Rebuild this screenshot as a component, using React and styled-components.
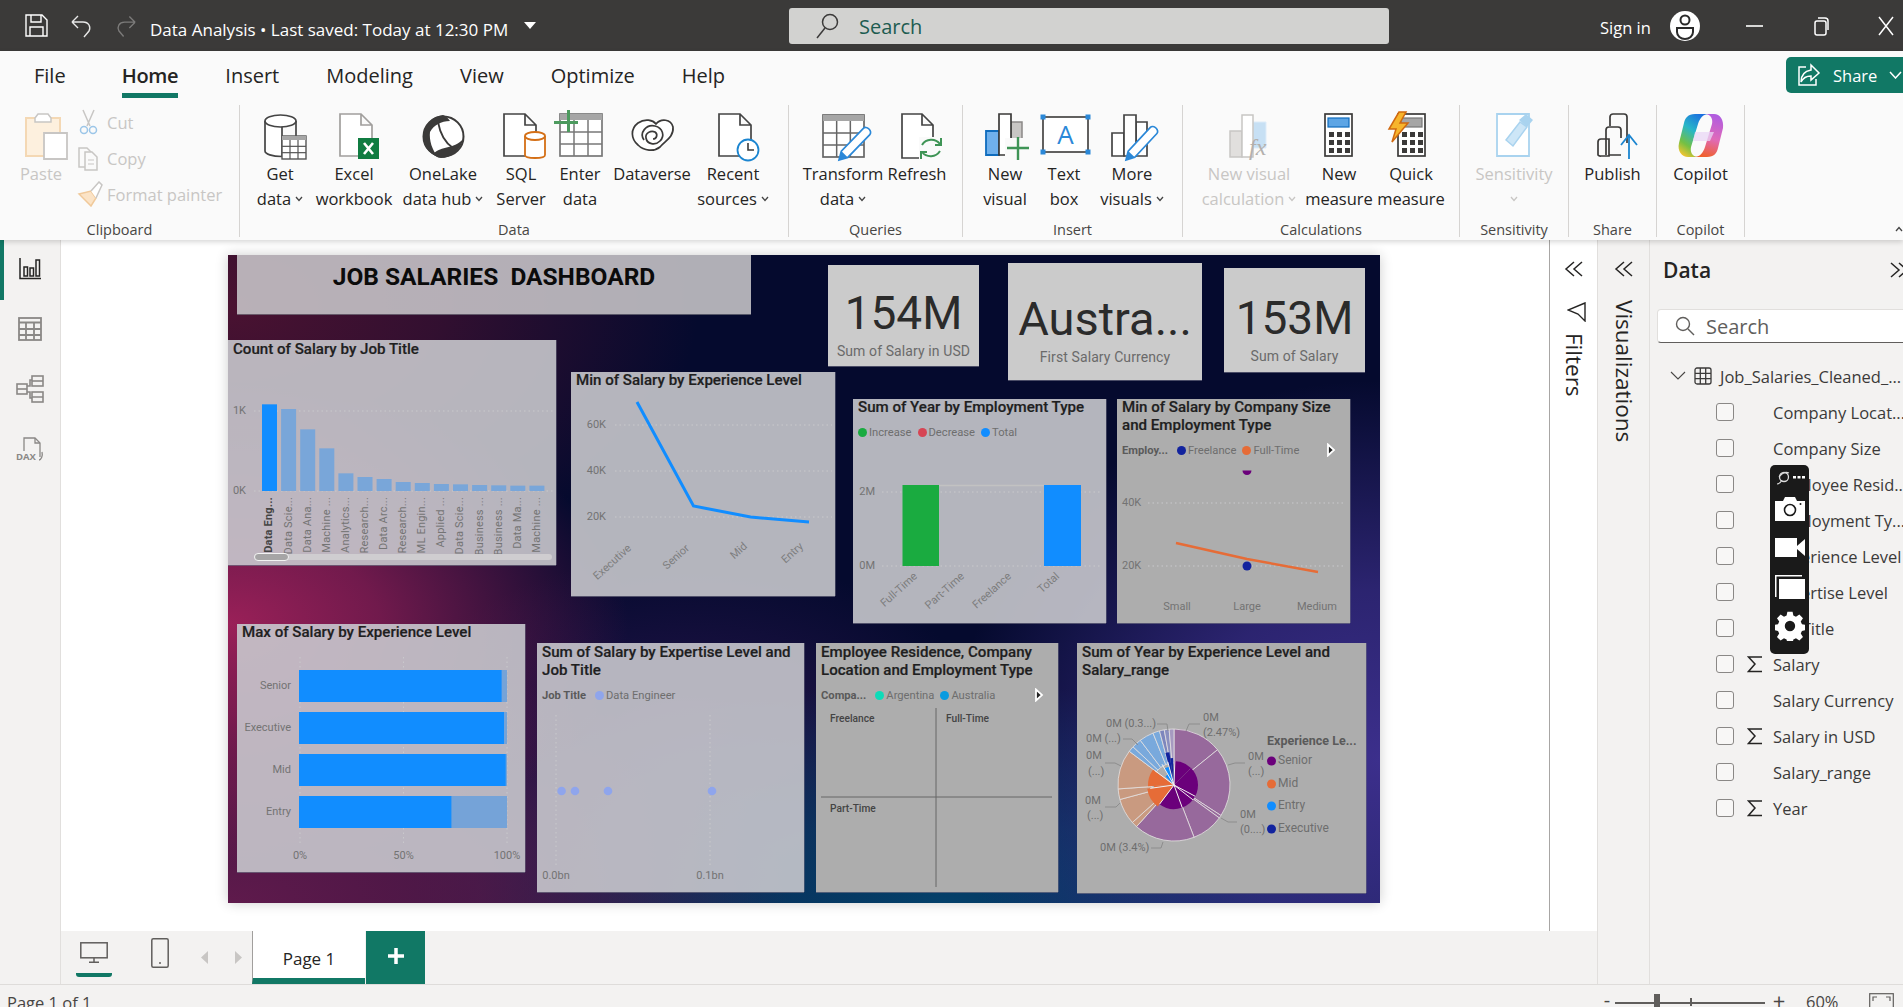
import React from 'react';
import styled, { createGlobalStyle } from 'styled-components';

const Global = createGlobalStyle`
  html, body { margin: 0; padding: 0; background: #fff; overflow: hidden; }
  * { box-sizing: border-box; }
`;

const GREEN = '#117865';
const UI = '"Open Sans", "Noto Sans", sans-serif';
const DIN = 'Roboto, "Liberation Sans", sans-serif';

const Page = styled.div`
  width: 1903px; height: 1007px; overflow: hidden; display: flex; flex-direction: column;
  font-family: ${UI}; color: #252423; background: #f3f2f1;
`;

/* ---------- title bar ---------- */
const TitleBar = styled.div`
  flex: none; height: 51px; background: #3b3a39; display: flex; align-items: center; color: #fff;
`;
const QuickIcon = styled.svg`
  flex: none; margin-left: ${p => p.$ml}px; display: block;
`;
const DocName = styled.div`
  margin-left: 13px; padding-top: 8px; font-size: 17px; white-space: pre; line-height: 22px; width: 362px; flex: none;
`;
const SearchBox = styled.div`
  margin-left: 253px; margin-top: 1px; width: 600px; height: 36px; border-radius: 3px; background: #d2d2d0;
  display: flex; align-items: center; padding-left: 26px; gap: 20px;
  font-size: 20px; color: #1d5c50; flex: none;
`;
const SignIn = styled.div`
  margin-left: 211px; padding-top: 3px; font-size: 16.5px; width: 70px; white-space: nowrap; flex: none;
`;
const WinButton = styled.svg`
  flex: none; margin-left: ${p => p.$ml}px;
`;

/* ---------- ribbon ---------- */
const Ribbon = styled.div`
  flex: none; height: 189px; background: #fafafa; position: relative; z-index: 2;
  box-shadow: 0 2px 5px rgba(0,0,0,.16);
`;
const TabRow = styled.div`
  height: 47px; display: flex; align-items: flex-start; gap: 47px; padding-left: 34px;
`;
const Tab = styled.div`
  height: 47px; padding-top: 10px; font-size: 20px; line-height: 30px; white-space: nowrap; flex: none;
  font-weight: ${p => (p.$active ? 600 : 400)}; margin-right: ${p => p.$mr || 0}px;
  letter-spacing: ${p => (p.$active ? '-0.3px' : 0)};
  border-bottom: 5px solid ${p => (p.$active ? GREEN : 'transparent')};
`;
const ShareButton = styled.div`
  margin-left: auto; margin-top: 6px; width: 117px; height: 36px; flex: none; background: ${GREEN}; color: #fff;
  border-radius: 5px 0 0 5px; display: flex; align-items: center; padding-left: 11px; font-size: 16.5px; gap: 12px;
`;
const GroupRow = styled.div`
  margin-top: 7px; height: 132px; display: flex;
`;
const Group = styled.div`
  flex: none; width: ${p => p.$w}px; height: 132px; display: flex; flex-direction: column;
  border-right: 1px solid #d6d4d2;
`;
const GroupButtons = styled.div`
  display: flex; padding-left: ${p => p.$pl || 0}px;
`;
const GroupLabel = styled.div`
  margin-top: auto; margin-bottom: -2px; height: 18px; line-height: 18px; text-align: center;
  font-size: 14.5px; color: #484644;
`;
const BigBtn = styled.div`
  flex: none; width: ${p => p.$w}px; display: flex; flex-direction: column; align-items: center;
  color: ${p => (p.$off ? '#c8c6c4' : '#252423')}; font-size: 16.5px; line-height: 24.5px;
`;
const BigIcon = styled.svg`
  margin-top: 7px; flex: none; display: block; overflow: visible;
`;
const BtnLine = styled.div`
  white-space: nowrap; flex: none; height: 24.5px; display: flex; align-items: center; gap: 4px;
`;
const SmallCol = styled.div`
  margin-left: 6px; display: flex; flex-direction: column; margin-top: -1px;
`;
const SmallBtn = styled.div`
  height: 36px; display: flex; align-items: center; color: #c8c6c4; font-size: 16.5px; white-space: nowrap;
`;
const SmallIcon = styled.svg`
  width: 30px; flex: none;
`;
const CollapseCaret = styled.svg`
  position: absolute; right: 0; bottom: 8px;
`;

/* ---------- main ---------- */
const Main = styled.div`
  flex: none; height: 744px; display: flex;
`;
const Rail = styled.div`
  flex: none; width: 61px; border-right: 1px solid #e1dfdd; background: #f3f2f1; display: flex; flex-direction: column; align-items: center;
`;
const RailItem = styled.div`
  height: 60px; width: 100%; display: flex; align-items: center; justify-content: center;
  border-left: 4px solid ${p => (p.$active ? GREEN : 'transparent')};
  padding-right: 4px; padding-bottom: 2px;
`;
const Middle = styled.div`
  flex: none; width: 1536px; display: flex; flex-direction: column;
`;
const CanvasRow = styled.div`
  flex: none; height: 691px; display: flex; background: #fff;
`;
const Canvas = styled.div`
  flex: none; width: 1488px; padding: 15px 0 0 167px; background: #fff;
`;
const Report = styled.div`
  position: relative; width: 1152px; height: 648px;
  box-shadow: 0 0 12px rgba(0,0,0,.2);
  background:
    radial-gradient(ellipse 400px 240px at 0% 57%, #9a2058 0%, rgba(154,32,88,.72) 38%, rgba(154,32,88,0) 100%),
    radial-gradient(ellipse 560px 260px at 0% 100%, #5f1a4c 0%, rgba(95,26,76,.75) 45%, rgba(95,26,76,0) 100%),
    radial-gradient(ellipse 470px 280px at 0% 8%, #4a1231 0%, rgba(74,18,49,.65) 45%, rgba(74,18,49,0) 100%),
    radial-gradient(ellipse 430px 380px at 100% 78%, #3c2f8c 0%, rgba(60,47,140,.7) 45%, rgba(60,47,140,0) 100%),
    radial-gradient(ellipse 560px 220px at 62% 100%, #04406a 0%, rgba(4,64,106,.7) 40%, rgba(4,64,106,0) 100%),
    radial-gradient(ellipse 320px 220px at 40% 80%, #2a1650 0%, rgba(42,22,80,0) 100%),
    #050a2e;
`;
const Banner = styled.div`
  position: absolute; left: 9px; top: 0; width: 514px; height: 59px; background: rgba(200,198,202,.88);
  box-shadow: 0 1px 0 rgba(120,120,130,.7);
  font-family: ${DIN}; font-weight: 700; font-size: 24.5px; color: #0b0b0b; white-space: pre;
  text-align: center; line-height: 44px;
`;
const Card = styled.div`
  position: absolute; left: ${p => p.$x - 228}px; top: ${p => p.$y - 255}px; width: ${p => p.$w}px; height: ${p => p.$h}px;
  background: #cbcbcb; display: flex; flex-direction: column; align-items: center; justify-content: center;
  padding-top: 15px; font-family: ${DIN};
  box-shadow: 0 1px 0 rgba(120,120,140,.6);
`;
const CardValue = styled.div`
  font-size: ${p => p.$s || 47}px; line-height: 56px; color: #2b2b2b; white-space: nowrap;
`;
const CardLabel = styled.div`
  font-size: 14px; line-height: 20px; color: #6a6a6a; white-space: nowrap; letter-spacing: .1px;
`;
const VisualBox = styled.div`
  position: absolute; left: ${p => p.$x - 228}px; top: ${p => p.$y - 255}px; width: ${p => p.$w}px; height: ${p => p.$h}px;
  background: ${p => (p.$solid ? '#adadad' : 'rgba(200,200,205,.9)')};
  display: flex; flex-direction: column; font-family: ${DIN};
  box-shadow: 0 1px 0 rgba(110,110,130,.7), 1px 0 0 rgba(110,110,130,.5);
`;
const Head = styled.div`
  flex: none; height: ${p => p.$h}px; padding-top: ${p => p.$pad || 0}px;
`;
const VisualTitle = styled.div`
  padding: 0 5px; font-size: 15.1px; font-weight: 500; line-height: 17.6px; color: #1f1f1f; white-space: pre-line;
  -webkit-text-stroke: .2px #1f1f1f;
`;
const Legend = styled.div`
  margin-top: ${p => p.$mt ?? 7}px; height: 18px; padding: 0 14px 0 5px; display: flex; align-items: center; gap: 6px;
  font-size: 11.2px; color: #6e6e6e; white-space: nowrap;
`;
const LegendName = styled.span`
  font-weight: 700; color: #5a5a5a; margin-right: 3px;
`;
const LegendItem = styled.span`
  display: flex; align-items: center; gap: 2px;
`;
const Dot = styled.i`
  width: 9px; height: 9px; border-radius: 50%; background: ${p => p.$c}; display: block;
`;
const LegendArrow = styled.svg`
  margin-left: auto;
`;
const Chart = styled.svg`
  flex: none; display: block; overflow: visible;
`;
const Axis = styled.text`
  font-family: ${DIN}; font-size: ${p => p.$s || 11}px; fill: ${p => p.$c || '#737373'}; font-weight: ${p => p.$b || 400};
  dominant-baseline: middle;
`;

/* ---------- filter / viz / data panes ---------- */
const FilterPane = styled.div`
  flex: none; width: 48px; border-left: 1px solid #a8a6a4; background: #fff; display: flex; flex-direction: column; align-items: center;
  padding-top: 20px;
`;
const VertText = styled.div`
  writing-mode: vertical-rl; font-size: 22.5px; font-weight: 500; line-height: 26px; white-space: nowrap; color: #252423;
  margin-top: ${p => p.$mt}px;
`;
const VizPane = styled.div`
  flex: none; width: 52px; border-left: 1px solid #e1dfdd; background: #f3f2f1; display: flex; flex-direction: column; align-items: center;
  padding-top: 20px;
`;
const DataPane = styled.div`
  flex: none; width: 261px; border-left: 1px solid #e1dfdd; background: #f3f2f1; position: relative;
`;
const DataHead = styled.div`
  height: 30px; margin-top: 15px; padding-left: 13px; display: flex; align-items: center;
  font-size: 21px; font-weight: 600; color: #252423;
`;
const DataChevron = styled.svg`
  margin-left: 178px; flex: none;
`;
const DataSearch = styled.div`
  margin: 24px 0 0 7px; width: 260px; height: 34px; background: #fff; border-radius: 4px;
  border: 1px solid #e1dfdd; border-bottom: 1.5px solid #605e5c; display: flex; align-items: center; padding-left: 17px; gap: 11px;
  font-size: 20px; color: #605e5c;
`;
const Tree = styled.div`
  margin-top: 15px;
`;
const TableRow = styled.div`
  height: 36px; padding-left: 20px; display: flex; align-items: center; gap: 8px; font-size: 16.5px; color: #3b3a39; white-space: nowrap;
`;
const FieldRow = styled.div`
  height: 36px; padding-left: 66px; display: flex; align-items: center; font-size: 16.5px; color: #3b3a39; white-space: nowrap;
`;
const Check = styled.span`
  flex: none; width: 18px; height: 18px; border-radius: 3px; border: 1px solid #8a8886; background: #f8f7f6;
`;
const SigmaSlot = styled.span`
  flex: none; width: 39px; padding-left: 13px; display: flex;
`;
const Recorder = styled.div`
  position: absolute; left: 120px; top: 225px; width: 39px; height: 189px; background: #1a1a1a; border-radius: 5px;
  display: flex; flex-direction: column; align-items: center; padding-top: 5px;
`;

/* ---------- page bar & status ---------- */
const PageBar = styled.div`
  flex: none; height: 53px; background: #f3f2f1; display: flex; align-items: flex-start;
`;
const DeviceBtn = styled.div`
  flex: none; height: 46px; width: ${p => p.$w}px; margin-left: ${p => p.$ml}px; padding-top: ${p => p.$pt}px;
  display: flex; justify-content: center; align-items: flex-start;
  border-bottom: 4px solid ${p => (p.$active ? GREEN : 'transparent')}; border-radius: 0 0 3px 3px;
`;
const PageArrow = styled.svg`
  flex: none; margin: 20px 0 0 ${p => p.$ml}px;
`;
const PageTab = styled.div`
  flex: none; margin-left: 8px; width: 113px; height: 53px; background: #fff; border-left: 1px solid #a19f9d;
  border-bottom: 6px solid ${GREEN}; display: flex; align-items: center; justify-content: center;
  padding-top: 7px; font-size: 17px; font-weight: 500; color: #252423;
`;
const PlusTab = styled.div`
  flex: none; margin-left: 1px; width: 59px; height: 53px; background: ${GREEN}; display: flex; align-items: center; justify-content: center;
  padding-bottom: 3px;
`;
const Status = styled.div`
  flex: none; height: 23px; border-top: 1px solid #dedcda; background: #f3f2f1; display: flex; overflow: hidden;
  padding-left: 7px; font-size: 16.5px; color: #484644; line-height: 23px; align-items: flex-start;
`;
const StatusPageText = styled.div`
  padding-top: 6px; white-space: nowrap;
`;
const ZoomBar = styled.div`
  margin-left: auto; margin-right: 4px; width: 297px; display: flex; flex: none; align-items: flex-start; position: relative; height: 23px;
`;
const ZoomSign = styled.div`
  flex: none; width: ${p => p.$w}px; font-size: ${p => p.$s}px; line-height: 20px; text-align: center; color: #484644; padding-top: 5px;
`;
const ZoomTrack = styled.div`
  flex: none; width: 150px; height: 1.5px; background: #605e5c; margin-top: 17px; margin-left: 3px; position: relative;
`;
const ZoomThumb = styled.i`
  position: absolute; left: 39px; top: -8px; width: 6px; height: 14px; background: #605e5c; display: block;
`;
const ZoomTick = styled.i`
  position: absolute; left: 75px; top: -4px; width: 1.5px; height: 8px; background: #605e5c; display: block;
`;
const ZoomPct = styled.div`
  flex: none; margin-left: 13px; width: 38px; font-size: 16.5px; line-height: 20px; padding-top: 7px; color: #484644;
`;
const FitIcon = styled.svg`
  flex: none; margin: 8px 0 0 25px;
`;

/* ---------- icons ---------- */
const Ico = ({ children, w = 56, h = 50 }) => (
  <BigIcon width={w} height={h} viewBox={`0 0 ${w} ${h}`} fill="none">{children}</BigIcon>
);
const Doc = ({ x, c = '#444', w = 32, h = 42 }) => (
  <path d={`M${x} 2h${w - 11}l11 11v${h - 11}h-${w}zM${x + w - 11} 2v11h11`} stroke={c} strokeWidth="1.7" fill="#fff" />
);
const TableGrid = ({ x, y, w, h, c = '#6b6a69', sw = 1.5, head = 5, rows = 3, cols = 3, hc = '#a6a6a6' }) => {
  const l = [];
  for (let i = 1; i < cols; i++) l.push(<line key={'c' + i} x1={x + (w * i) / cols} x2={x + (w * i) / cols} y1={y + head} y2={y + h} stroke={c} strokeWidth={sw} />);
  for (let i = 1; i < rows; i++) l.push(<line key={'r' + i} x1={x} x2={x + w} y1={y + head + ((h - head) * i) / rows} y2={y + head + ((h - head) * i) / rows} stroke={c} strokeWidth={sw} />);
  return (<g><rect x={x} y={y} width={w} height={h} fill="#fff" stroke={c} strokeWidth={sw + .2} /><rect x={x} y={y} width={w} height={head} fill={hc} />{l}</g>);
};
const Pencil = ({ x1, y1, x2, y2 }) => {
  const ang = (Math.atan2(y1 - y2, x1 - x2) * 180) / Math.PI;
  const len = Math.hypot(x1 - x2, y1 - y2);
  return (
    <g transform={`translate(${x2} ${y2}) rotate(${ang})`}>
      <path d={`M0 0l8 -4.5H${len - 2}a3 4 0 0 1 0 9H8z`} fill="#fff" stroke="#2b88d8" strokeWidth="1.7" />
      <path d="M0 0l8 -4.5v9z" fill="#2b88d8" />
    </g>
  );
};
const Bars = ({ c = '#444' }) => (
  <g stroke={c} strokeWidth="1.7" fill="#fff">
    <path d="M32 10h11v34H32z" /><path d="M8 21h12v23H8z" /><path d="M20 3h12v41H20z" />
  </g>
);
const CalcBody = ({ x, blue }) => {
  const d = [];
  [22, 30, 38].forEach(y => [4, 12, 20].forEach(dx => d.push(<rect key={`${y}${dx}`} x={x + dx} y={y - 2} width="5" height="5" fill="#3b3a39" />)));
  return (
    <g>
      <rect x={x} y="2" width="27" height="42" fill="#fff" stroke="#3b3a39" strokeWidth="1.7" />
      <rect x={x + 3} y="6" width="21" height="9" fill={blue ? '#5da5e5' : '#a6a6a6'} stroke={blue ? '#0f6cbd' : '#777'} strokeWidth="1.2" />
      {d}
    </g>
  );
};

const IGet = () => (<Ico>
  <path d="M13 9v30c0 3 7 5.5 17 5.5V9" stroke="#444" strokeWidth="1.7" fill="#fff" />
  <path d="M44 9v15" stroke="#444" strokeWidth="1.7" />
  <ellipse cx="28.5" cy="9" rx="15.5" ry="6" stroke="#444" strokeWidth="1.7" fill="#fff" />
  <TableGrid x={30} y={24} w={24} h={23} c="#555" sw={1.2} head={4} />
</Ico>);
const IExcel = () => (<Ico>
  <Doc x={14} c="#a19f9d" />
  <rect x="32" y="26" width="21" height="21" fill="#107c41" />
  <path d="M38 31l9 11M47 31l-9 11" stroke="#fff" strokeWidth="2.6" />
</Ico>);
const IOneLake = () => (<Ico>
  <circle cx="28.5" cy="24.5" r="20" stroke="#3b3a39" strokeWidth="2" fill="#fff" />
  <path d="M28 3C18 4 9 12 8.5 24C8 33 13 41 23 45C17 38 14 28 15 20C19 13 26 9 35 9C33 6 31 4 28 3Z" fill="#3b3a39" />
  <path d="M18 42C27 33 38 38 48 27C46 38 36 46 26 46C23 46 20 44 18 42Z" fill="#3b3a39" />
  <path d="M23 10C25 21 29 30 38 36" stroke="#3b3a39" strokeWidth="1.8" />
</Ico>);
const ISql = () => (<Ico>
  <Doc x={11} />
  <path d="M32 24v19c0 2 4 3 10 3s10-1 10-3V24" stroke="#d46f16" strokeWidth="1.8" fill="#fff" />
  <ellipse cx="42" cy="24" rx="10" ry="4" stroke="#d46f16" strokeWidth="1.8" fill="#fff" />
</Ico>);
const IEnter = () => (<Ico>
  <TableGrid x={8} y={2} w={42} h={42} c="#777" sw={1.5} head={6} />
  <path d="M2 10.5h24M16.5 -2v22" stroke="#4c9a5e" strokeWidth="3" />
</Ico>);
const IDataverse = () => (<Ico>
  <path d="M14 33C7 27 6 17 14 11C21 6 29 8 32 12C37 6 47 7 49 15C50 25 41 29 36 35C30 40 20 39 14 33Z" stroke="#3b3a39" strokeWidth="1.7" fill="#fff" />
  <path d="M20 28C15 21 22 12 31 14C39 16 41 24 36 29C31 34 23 32 22 26C21 21 27 18 31 20C34 22 33 27 29 27" stroke="#3b3a39" strokeWidth="1.7" />
</Ico>);
const IRecent = () => (<Ico>
  <Doc x={14} />
  <circle cx="43" cy="38" r="10.5" stroke="#1b85d0" strokeWidth="1.8" fill="#fff" />
  <path d="M43 31v7h6" stroke="#3b3a39" strokeWidth="1.6" />
</Ico>);
const ITransform = () => (<Ico>
  <TableGrid x={8} y={3} w={41} h={42} c="#666" sw={1.5} head={6} />
  <Pencil x1={53} y1={18} x2={24} y2={48} />
</Ico>);
const IRefresh = () => (<Ico>
  <Doc x={13} h={44} w={31} />
  <rect x="30" y="25" width="24" height="24" fill="#fafafa" />
  <path d="M33 33a11 11 0 0 1 18-1M51 39a11 11 0 0 1-18 1" stroke="#3f9456" strokeWidth="2" />
  <path d="M52 26v7h-6M32 47v-7h6" stroke="#3f9456" strokeWidth="2" />
</Ico>);
const INewVisual = () => (<Ico>
  <path d="M34 10h11v30H34z" fill="#c8c6c4" stroke="#8a8886" strokeWidth="1.5" />
  <path d="M9 19h13v24H9z" fill="#6fb0ec" stroke="#0f6cbd" strokeWidth="1.8" />
  <path d="M22 2h12v41H22z" fill="#fff" stroke="#3b3a39" strokeWidth="1.7" />
  <rect x="28" y="26" width="26" height="22" fill="#fafafa" />
  <path d="M30 36h22M41 25v23" stroke="#3f9456" strokeWidth="2.4" />
</Ico>);
const ITextBox = () => (<Ico>
  <rect x="7" y="5" width="45" height="35" fill="#fff" stroke="#3b3a39" strokeWidth="1.6" />
  {[[7, 5], [52, 5], [7, 40], [52, 40]].map(([x, y]) => <rect key={x + '' + y} x={x - 2.5} y={y - 2.5} width="5" height="5" fill="#2b88d8" />)}
  <text x="29.5" y="32" textAnchor="middle" fontSize="26" fontFamily={UI} fill="#2b88d8">A</text>
</Ico>);
const IMore = () => (<Ico><Bars /><Pencil x1={51} y1={17} x2={22} y2={48} /></Ico>);
const ICalc = () => (<Ico>
  <path d="M32 10h13v26H32z" fill="#c7e0f4" stroke="#deecf9" />
  <path d="M9 19h12v26H9z" fill="#e1dfdd" stroke="#c8c6c4" strokeWidth="1.5" />
  <path d="M21 3h11v42H21z" fill="#fff" stroke="#c8c6c4" strokeWidth="1.5" />
  <text x="28" y="43" fontSize="24" fontStyle="italic" fontFamily="Liberation Serif, serif" fill="#b3b0ad">fx</text>
</Ico>);
const IMeasure = () => (<Ico><CalcBody x={14} blue /></Ico>);
const IQuick = () => (<Ico>
  <CalcBody x={15} />
  <path d="M16 0L6 17h7L9 30L25 11h-8L23 0z" fill="#f7b52c" stroke="#d0690f" strokeWidth="1.5" />
</Ico>);
const ISens = () => (<Ico>
  <path d="M11 2h32v42H11z" fill="#fff" stroke="#a9d3ef" strokeWidth="1.8" />
  <path d="M20 28L34 10l7 5L27 34z" fill="#cde6f7" stroke="#a9d3ef" strokeWidth="1.5" />
  <path d="M33 8l7-6 7 6-6 7z" fill="#a9d3ef" />
</Ico>);
const IPublish = () => (<Ico>
  <path d="M25 14V5a3 3 0 0 1 3-3h11a3 3 0 0 1 3 3v26" stroke="#3b3a39" strokeWidth="1.7" />
  <path d="M21 43V18a3 3 0 0 1 3-3h9a3 3 0 0 1 3 3v8" stroke="#3b3a39" strokeWidth="1.7" />
  <path d="M13 43V30a3 3 0 0 1 3-3h8v17h-8a3 3 0 0 1-3-1zM24 43h12" stroke="#3b3a39" strokeWidth="1.7" />
  <path d="M44 47V24M36 33l8-10 8 10" stroke="#1b85d0" strokeWidth="1.8" />
</Ico>);
const ICopilot = () => (<Ico>
  <defs>
    <linearGradient id="cpa" x1="0.7" y1="0" x2="0.2" y2="1"><stop offset="0" stopColor="#1b6fe0" /><stop offset=".4" stopColor="#27b6c8" /><stop offset=".75" stopColor="#74c043" /><stop offset="1" stopColor="#f4c430" /></linearGradient>
    <linearGradient id="cpb" x1="0.6" y1="0" x2="0.4" y2="1"><stop offset="0" stopColor="#b05ce0" /><stop offset=".55" stopColor="#e06ab8" /><stop offset="1" stopColor="#f0602c" /></linearGradient>
  </defs>
  <path d="M22 2C15 2 12 6 11 11L6 31C4 39 9 45 15 45L24 45C19 44 17 40 18 35L25 12C27 6 30 2 36 2Z" fill="url(#cpa)" />
  <path d="M34 45C41 45 44 41 45 36L50 16C51 8 47 2 41 2L33 2C38 3 40 7 39 12L32 35C30 41 27 45 21 45Z" fill="url(#cpb)" />
  <path d="M22 20h19l-4 9H20z" fill="#e9d7f5" opacity=".75" />
</Ico>);
const Chev = ({ c = '#444' }) => (<svg width="8" height="6" viewBox="0 0 8 6" fill="none"><path d="M1 1l3 3.5L7 1" stroke={c} strokeWidth="1.3" /></svg>);

const RibbonBtn = ({ w, icon, lines, chev, off }) => (
  <BigBtn $w={w} $off={off}>
    {icon}
    {lines.map((l, i) => (
      <BtnLine key={i}>{l}{chev && i === lines.length - 1 ? <Chev c={off ? '#c8c6c4' : '#444'} /> : null}</BtnLine>
    ))}
  </BigBtn>
);

/* ---------- visual helper ---------- */
const Visual = ({ x, y, w, h, head, pad, solid, title, legend, children }) => (
  <VisualBox $x={x} $y={y} $w={w} $h={h} $solid={solid}>
    <Head $h={head} $pad={pad}>
      <VisualTitle>{title}</VisualTitle>
      {legend}
    </Head>
    <Chart width={w} height={h - head} viewBox={`${x} ${y + head} ${w} ${h - head}`}>{children}</Chart>
  </VisualBox>
);
const Grid = ({ x1, y1, x2, y2 }) => <line x1={x1} y1={y1} x2={x2} y2={y2} stroke="#c9c9cc" strokeWidth="1" strokeDasharray="1.5 3" />;
const Tilted = ({ x, y, children, a = -42 }) => (
  <Axis x={x} y={y} textAnchor="end" transform={`rotate(${a} ${x} ${y})`} $c="#7d7d7d">{children}</Axis>
);
const ScrollArrow = () => (
  <LegendArrow width="10" height="14" viewBox="0 0 10 14"><path d="M2 1.5v11l6-5.500z" fill="#222" stroke="#fff" strokeWidth="1.8" /></LegendArrow>
);

const arcPath = (cx, cy, r0, r1, a0, a1) => {
  const p = (r, a) => {
    const t = ((a - 90) * Math.PI) / 180;
    return `${(cx + r * Math.cos(t)).toFixed(2)} ${(cy + r * Math.sin(t)).toFixed(2)}`;
  };
  const large = a1 - a0 > 180 ? 1 : 0;
  return `M${p(r1, a0)}A${r1} ${r1} 0 ${large} 1 ${p(r1, a1)}L${p(r0, a1)}${r0 > 0 ? `A${r0} ${r0} 0 ${large} 0 ${p(r0, a0)}` : ''}Z`;
};

const barTops = [463, 477, 538, 595, 670, 681, 687, 696, 699, 702, 703, 705, 706, 707, 707];
const jobLabels = ['Data Eng...', 'Data Scie...', 'Data Ana...', 'Machine ...', 'Analytics...', 'Research...', 'Data Arc...', 'Research...', 'ML Engin...', 'Applied ...', 'Data Scie...', 'Business ...', 'Business ...', 'Data Ma...', 'Machine ...'];
const hBars = [
  ['Senior', 670, 501.6], ['Executive', 712, 504], ['Mid', 754, 505.7], ['Entry', 796, 451.4],
];
const OUT = { s: '#97699c', m: '#c99a80', e: '#79a9dc', x: '#7d86bd' };
const outer = [
  [0, 51, OUT.s], [51, 123, OUT.s], [123, 126, OUT.s], [126, 159, OUT.s], [159, 222, OUT.s],
  [222, 228, OUT.m], [228, 255, OUT.m], [255, 266, OUT.m], [266, 307, OUT.m],
  [307, 313, OUT.e], [313, 323, OUT.e], [323, 338, OUT.e], [338, 345, OUT.e],
  [345, 350, OUT.x], [350, 355, '#8a8fc0'], [355, 360, '#a69ac0'],
];
const inner = [
  [0, 45, 24, '#6b007b'], [45, 118, 24, '#6b007b'], [118, 160, 24, '#6b007b'], [160, 217, 24, '#6b007b'],
  [217, 262, 27, '#e66c37'], [262, 267, 20, '#e66c37'], [267, 306, 26, '#e66c37'],
  [315, 330, 12, '#118dff'], [330, 345, 19, '#118dff'], [345, 352, 33, '#12239e'], [352, 358, 27, '#12239e'],
];
const sunLabels = [
  [1203, 718, '0M'], [1203, 733, '(2.47%)'], [1106, 724, '0M (0.3...)'], [1086, 739, '0M (...)'],
  [1086, 756, '0M'], [1088, 772, '(...)'], [1085, 801, '0M'], [1087, 816, '(...)'], [1100, 848, '0M (3.4%)'],
  [1248, 757, '0M'], [1248, 772, '(...)'], [1240, 815, '0M'], [1240, 830, '(0....)'],
];
const leaders = [
  '1186 731L1189 724H1200', '1157 724H1167L1168 731', '1123 739H1132L1138 745', '1105 763H1115L1121 766',
  '1105 807H1116L1120 803', '1151 848H1161L1163 842', '1228 765L1235 763H1245', '1221 818L1228 822H1237',
];
const sunLegend = [['Senior', 761, '#6b007b'], ['Mid', 784, '#e66c37'], ['Entry', 806, '#118dff'], ['Executive', 829, '#12239e']];
const fields = [
  ['Company Locat...'], ['Company Size'], ['Employee Resid...'], ['Employment Ty...'], ['Experience Level'],
  ['Expertise Level'], ['Job Title'], ['Salary', 1], ['Salary Currency'], ['Salary in USD', 1], ['Salary_range'], ['Year', 1],
];
const DoubleChev = () => (
  <svg width="20" height="18" viewBox="0 0 20 18" fill="none" style={{ flex: 'none' }}>
    <path d="M10 2L2 9l8 7M18 2l-8 7 8 7" stroke="#252423" strokeWidth="1.5" />
  </svg>
);
const Sigma = () => (<svg width="16" height="18" viewBox="0 0 16 18" fill="none"><path d="M15 2H1.5L8 9l-6.500 7.500H15" stroke="#252423" strokeWidth="1.5" /></svg>);

function DoubleChevSvg({ className }) {
  return (
    <svg className={className} width="20" height="18" viewBox="0 0 20 18" fill="none">
      <path d="M2 2l8 7-8 7M10 2l8 7-8 7" stroke="#252423" strokeWidth="1.5" />
    </svg>
  );
}

export default function App() {
  return (
    <Page>
      <Global />
      <TitleBar>
        <QuickIcon $ml={25} width="23" height="23" viewBox="0 0 23 23" fill="none">
          <path d="M1 1h16l5 5v16H1zM6 1v7h10V1M5 22v-9h13v9" stroke="#fff" strokeWidth="1.4" />
        </QuickIcon>
        <QuickIcon $ml={22} width="23" height="24" viewBox="0 0 23 24" fill="none">
          <path d="M2 8h11c6 0 8 5 6 9l-5 6M2 8l6-6M2 8l6 6" stroke="#e8e8e8" strokeWidth="1.4" />
        </QuickIcon>
        <QuickIcon $ml={22} width="22" height="24" viewBox="0 0 23 24" fill="none">
          <path d="M21 8H10c-6 0-8 5-6 9l5 6M21 8l-6-6M21 8l-6 6" stroke="#7c7b7a" strokeWidth="1.4" />
        </QuickIcon>
        <DocName>Data Analysis • Last saved: Today at 12:30 PM</DocName>
        <QuickIcon $ml={12} width="12" height="7" viewBox="0 0 12 7"><path d="M0 0h12L6 7z" fill="#fff" /></QuickIcon>
        <SearchBox>
          <svg width="24" height="26" viewBox="0 0 24 26" fill="none"><circle cx="15" cy="9" r="7.5" stroke="#3b3a39" strokeWidth="1.5" /><path d="M10 15L2 25" stroke="#3b3a39" strokeWidth="1.5" /></svg>
          Search
        </SearchBox>
        <SignIn>Sign in</SignIn>
        <svg width="30" height="30" viewBox="0 0 30 30" style={{ flex: 'none' }}>
          <circle cx="15" cy="15" r="15" fill="#fff" />
          <circle cx="15" cy="9" r="4.5" fill="none" stroke="#2a2a2a" strokeWidth="2" />
          <path d="M7 17h16v4a8 7 0 0 1-16 0z" fill="none" stroke="#2a2a2a" strokeWidth="2" />
        </svg>
        <WinButton $ml={46} width="17" height="4" viewBox="0 0 17 4"><path d="M0 2h17" stroke="#fff" strokeWidth="1.6" /></WinButton>
        <WinButton $ml={50} width="17" height="20" viewBox="0 0 17 20" fill="none"><rect x="2" y="5" width="11" height="14" rx="2" stroke="#fff" strokeWidth="1.5" /><path d="M5 2h7a3 3 0 0 1 3 3v9" stroke="#fff" strokeWidth="1.5" /></WinButton>
        <WinButton $ml={48} width="16" height="20" viewBox="0 0 16 20" fill="none"><path d="M1 1l14 18M15 1L1 19" stroke="#fff" strokeWidth="1.5" /></WinButton>
      </TitleBar>

      <Ribbon>
        <TabRow>
          <Tab $mr={9}>File</Tab><Tab $active>Home</Tab><Tab>Insert</Tab><Tab>Modeling</Tab><Tab>View</Tab><Tab>Optimize</Tab><Tab>Help</Tab>
          <ShareButton>
            <svg width="24" height="24" viewBox="0 0 24 24" fill="none"><path d="M14 2l8 8-8 7v-4c-5 0-8 2-10 6 0-7 4-11 10-12z" stroke="#fff" strokeWidth="1.5" /><path d="M9 4H2v18h17v-6" stroke="#fff" strokeWidth="1.5" /></svg>
            Share
            <svg width="13" height="8" viewBox="0 0 13 8" fill="none"><path d="M1 1l5.5 6L12 1" stroke="#fff" strokeWidth="1.5" /></svg>
          </ShareButton>
        </TabRow>
        <GroupRow>
          <Group $w={240}>
            <GroupButtons $pl={11}>
              <BigBtn $w={60} $off>
                <BigIcon width="60" height="50" viewBox="0 0 60 50" fill="none">
                  <path d="M15 6h34v38H15z" fill="#fdf0de" stroke="#f4d8b4" strokeWidth="2" />
                  <path d="M24 6l3-4h10l3 4v4H24z" fill="#fff" stroke="#c8c6c4" strokeWidth="1.5" />
                  <path d="M33 21h23v26H33z" fill="#fff" stroke="#c8c6c4" strokeWidth="1.8" />
                </BigIcon>
                <BtnLine>Paste</BtnLine>
              </BigBtn>
              <SmallCol>
                <SmallBtn>
                  <SmallIcon height="28" viewBox="0 0 30 28" fill="none"><path d="M6 2l7 16M17 2l-7 16" stroke="#c8c6c4" strokeWidth="1.5" /><circle cx="7" cy="22" r="3.5" stroke="#9cc6e8" strokeWidth="1.5" /><circle cx="16" cy="22" r="3.5" stroke="#9cc6e8" strokeWidth="1.5" /></SmallIcon>
                  Cut
                </SmallBtn>
                <SmallBtn>
                  <SmallIcon height="26" viewBox="0 0 30 26" fill="none"><path d="M2 3h8l4 4v15H2z" stroke="#c8c6c4" strokeWidth="1.5" /><path d="M8 7h7l5 5v13H8z" fill="#fafafa" stroke="#c8c6c4" strokeWidth="1.5" /><path d="M11 15h6M11 19h6" stroke="#c8c6c4" /></SmallIcon>
                  Copy
                </SmallBtn>
                <SmallBtn>
                  <SmallIcon height="26" viewBox="0 0 30 26" fill="none"><path d="M2 13l12 -3 5 7-5 8L2 13z" fill="#fbe3c6" stroke="#f0c99a" strokeWidth="1.5" /><path d="M14 10l8-9 3 3-6 13" fill="#fff" stroke="#c8c6c4" strokeWidth="1.5" /></SmallIcon>
                  Format painter
                </SmallBtn>
              </SmallCol>
            </GroupButtons>
            <GroupLabel>Clipboard</GroupLabel>
          </Group>
          <Group $w={549}>
            <GroupButtons $pl={5}>
              <RibbonBtn w={70} icon={<IGet />} lines={['Get', 'data']} chev />
              <RibbonBtn w={78} icon={<IExcel />} lines={['Excel', 'workbook']} />
              <RibbonBtn w={100} icon={<IOneLake />} lines={['OneLake', 'data hub']} chev />
              <RibbonBtn w={56} icon={<ISql />} lines={['SQL', 'Server']} />
              <RibbonBtn w={62} icon={<IEnter />} lines={['Enter', 'data']} />
              <RibbonBtn w={82} icon={<IDataverse />} lines={['Dataverse']} />
              <RibbonBtn w={80} icon={<IRecent />} lines={['Recent', 'sources']} chev />
            </GroupButtons>
            <GroupLabel>Data</GroupLabel>
          </Group>
          <Group $w={174}>
            <GroupButtons $pl={7}>
              <RibbonBtn w={94} icon={<ITransform />} lines={['Transform', 'data']} chev />
              <RibbonBtn w={54} icon={<IRefresh />} lines={['Refresh']} />
            </GroupButtons>
            <GroupLabel>Queries</GroupLabel>
          </Group>
          <Group $w={220}>
            <GroupButtons $pl={14}>
              <RibbonBtn w={56} icon={<INewVisual />} lines={['New', 'visual']} />
              <RibbonBtn w={62} icon={<ITextBox />} lines={['Text', 'box']} />
              <RibbonBtn w={74} icon={<IMore />} lines={['More', 'visuals']} chev />
            </GroupButtons>
            <GroupLabel>Insert</GroupLabel>
          </Group>
          <Group $w={277}>
            <GroupButtons $pl={10}>
              <RibbonBtn w={112} off icon={<ICalc />} lines={['New visual', 'calculation']} chev />
              <RibbonBtn w={68} icon={<IMeasure />} lines={['New', 'measure']} />
              <RibbonBtn w={76} icon={<IQuick />} lines={['Quick', 'measure']} />
            </GroupButtons>
            <GroupLabel>Calculations</GroupLabel>
          </Group>
          <Group $w={109}>
            <GroupButtons>
              <RibbonBtn w={108} off icon={<ISens />} lines={['Sensitivity', '']} chev />
            </GroupButtons>
            <GroupLabel>Sensitivity</GroupLabel>
          </Group>
          <Group $w={88}>
            <GroupButtons>
              <RibbonBtn w={87} icon={<IPublish />} lines={['Publish']} />
            </GroupButtons>
            <GroupLabel>Share</GroupLabel>
          </Group>
          <Group $w={88}>
            <GroupButtons>
              <RibbonBtn w={87} icon={<ICopilot />} lines={['Copilot']} />
            </GroupButtons>
            <GroupLabel>Copilot</GroupLabel>
          </Group>
        </GroupRow>
        <CollapseCaret width="8" height="6" viewBox="0 0 8 6" fill="none"><path d="M1 5l3-3.5L7 5" stroke="#444" strokeWidth="1.3" /></CollapseCaret>
      </Ribbon>

      <Main>
        <Rail>
          <RailItem $active>
            <svg width="22" height="22" viewBox="0 0 22 22" fill="none" stroke="#252423" strokeWidth="1.5"><path d="M1 0v20.500h21" /><rect x="5" y="9" width="3.5" height="9" /><rect x="11" y="10" width="3.5" height="8" /><rect x="17" y="2" width="3.5" height="16" /></svg>
          </RailItem>
          <RailItem>
            <svg width="24" height="24" viewBox="0 0 24 24" fill="none" stroke="#8a8886" strokeWidth="1.8"><rect x="1" y="1" width="22" height="22" /><path d="M1 5.500h22M1 12h22M1 18h22M8 5.500V23M16 5.500V23" /></svg>
          </RailItem>
          <RailItem>
            <svg width="28" height="28" viewBox="0 0 28 28" fill="none" stroke="#8a8886" strokeWidth="1.6"><rect x="1" y="9" width="10" height="10" /><path d="M1 14h10" /><rect x="16" y="1" width="11" height="10" /><path d="M16 6h11" /><rect x="16" y="17" width="11" height="10" /><path d="M16 22h11M11 11h3V5h2M11 17h3v6h2" /></svg>
          </RailItem>
          <RailItem>
            <svg width="28" height="26" viewBox="0 0 28 26" fill="none"><path d="M8 15V2h11l5 5v14" stroke="#8a8886" strokeWidth="1.3" /><path d="M19 2v5h5" stroke="#8a8886" strokeWidth="1.3" /><text x="0" y="24" fontSize="9.500" fontWeight="700" fontFamily={UI} fill="#8a8886">DAX</text><path d="M26 16c1 4-1 8-3 8" stroke="#8a8886" strokeWidth="1.3" /></svg>
          </RailItem>
        </Rail>
        <Middle>
          <CanvasRow>
            <Canvas>
              <Report>
                <Banner>JOB SALARIES  DASHBOARD</Banner>
                <Card $x={828} $y={265} $w={151} $h={101}>
                  <CardValue $s={46}>154M</CardValue>
                  <CardLabel>Sum of Salary in USD</CardLabel>
                </Card>
                <Card $x={1008} $y={263} $w={194} $h={117}>
                  <CardValue>Austra...</CardValue>
                  <CardLabel>First Salary Currency</CardLabel>
                </Card>
                <Card $x={1224} $y={268} $w={141} $h={104}>
                  <CardValue $s={46}>153M</CardValue>
                  <CardLabel>Sum of Salary</CardLabel>
                </Card>

                <Visual x={228} y={340} w={328} h={225} head={22} pad={1} title="Count of Salary by Job Title">
                  <Grid x1={254} y1={411} x2={553} y2={411} />
                  <Grid x1={254} y1={491} x2={553} y2={491} />
                  <Axis x={246} y={411} textAnchor="end">1K</Axis>
                  <Axis x={246} y={491} textAnchor="end">0K</Axis>
                  {barTops.map((t, i) => {
                    const top = 250 + t / 3;
                    return <rect key={i} x={262 + i * 19.1} y={top} width="15" height={491 - top} fill={i === 0 ? '#118dff' : '#79a6d9'} />;
                  })}
                  {jobLabels.map((l, i) => {
                    const x = 269.5 + i * 19.1;
                    return (
                      <Axis key={i} x={x} y={497} textAnchor="end" transform={`rotate(-90 ${x} 497)`} $b={i === 0 ? 700 : 400} $c={i === 0 ? '#444' : '#747474'} style={{ letterSpacing: '.2px' }}>{l}</Axis>
                    );
                  })}
                  <rect x="254" y="554" width="298" height="6" rx="3" fill="#cfcdd0" />
                  <rect x="254.5" y="553.5" width="34" height="7" rx="3.5" fill="#a6a5a6" stroke="#f2f2f2" />
                </Visual>

                <Visual x={571} y={372} w={264} h={224} head={20} title="Min of Salary by Experience Level">
                  {[[425, '60K'], [471, '40K'], [517, '20K']].map(([y, t]) => (
                    <g key={t}><Grid x1={615} y1={y} x2={832} y2={y} /><Axis x={606} y={y} textAnchor="end">{t}</Axis></g>
                  ))}
                  <polyline points="637,402 693.5,506 750.6,517 809,522" fill="none" stroke="#118dff" strokeWidth="3" />
                  <Tilted x={630} y={547}>Executive</Tilted>
                  <Tilted x={688} y={547}>Senior</Tilted>
                  <Tilted x={746} y={545}>Mid</Tilted>
                  <Tilted x={802} y={545}>Entry</Tilted>
                </Visual>

                <Visual x={853} y={399} w={253} h={224} head={44} title="Sum of Year by Employment Type"
                  legend={<Legend>
                    <LegendItem><Dot $c="#1aab40" />Increase</LegendItem>
                    <LegendItem><Dot $c="#d64554" />Decrease</LegendItem>
                    <LegendItem><Dot $c="#118dff" />Total</LegendItem>
                  </Legend>}>
                  <Grid x1={882} y1={492} x2={1100} y2={492} />
                  <Grid x1={882} y1={566} x2={1100} y2={566} />
                  <Axis x={875} y={492} textAnchor="end">2M</Axis>
                  <Axis x={875} y={566} textAnchor="end">0M</Axis>
                  <line x1="939" y1="485.5" x2="1044" y2="485.5" stroke="#c2c2c2" strokeWidth="1.5" />
                  <rect x="902.5" y="485" width="36.5" height="81" fill="#1aab40" />
                  <rect x="1044" y="485" width="37" height="81" fill="#118dff" />
                  <Tilted x={916} y={575}>Full-Time</Tilted>
                  <Tilted x={963} y={575}>Part-Time</Tilted>
                  <Tilted x={1010} y={575}>Freelance</Tilted>
                  <Tilted x={1058} y={575}>Total</Tilted>
                </Visual>

                <Visual x={1117} y={399} w={233} h={224} head={61} solid title={'Min of Salary by Company Size\nand Employment Type'}
                  legend={<Legend>
                    <LegendName>Employ...</LegendName>
                    <LegendItem><Dot $c="#12239e" />Freelance</LegendItem>
                    <LegendItem><Dot $c="#e66c37" />Full-Time</LegendItem>
                    <ScrollArrow />
                  </Legend>}>
                  <path d="M1242.5 470.5h9a4.5 4.5 0 0 1-9 0z" fill="#6b007b" />
                  <Grid x1={1148} y1={503} x2={1345} y2={503} />
                  <Grid x1={1148} y1={566} x2={1345} y2={566} />
                  <Axis x={1122} y={503}>40K</Axis>
                  <Axis x={1122} y={566}>20K</Axis>
                  <polyline points="1176,543 1247,559 1318,572" fill="none" stroke="#e66c37" strokeWidth="2.5" />
                  <circle cx="1247" cy="566" r="4.5" fill="#12239e" />
                  <Axis x={1177} y={607} textAnchor="middle">Small</Axis>
                  <Axis x={1247} y={607} textAnchor="middle">Large</Axis>
                  <Axis x={1317} y={607} textAnchor="middle">Medium</Axis>
                </Visual>

                <Visual x={237} y={624} w={288} h={248} head={20} title="Max of Salary by Experience Level">
                  {[300, 403.5, 507].map(x => <Grid key={x} x1={x} y1={657} x2={x} y2={845} />)}
                  {hBars.map(([l, y, e]) => (
                    <g key={l}>
                      <rect x="299" y={y} width="208" height="32" fill="#75a3d8" />
                      <rect x="299" y={y} width={e - 299} height="32" fill="#118dff" />
                      <Axis x={291} y={y + 16} textAnchor="end">{l}</Axis>
                    </g>
                  ))}
                  <Axis x={300} y={856} textAnchor="middle">0%</Axis>
                  <Axis x={403.5} y={856} textAnchor="middle">50%</Axis>
                  <Axis x={507} y={856} textAnchor="middle">100%</Axis>
                </Visual>

                <Visual x={537} y={643} w={267} h={249} head={62} pad={1} title={'Sum of Salary by Expertise Level and\nJob Title'}
                  legend={<Legend>
                    <LegendName>Job Title</LegendName>
                    <LegendItem><Dot $c="#8fa5ec" />Data Engineer</LegendItem>
                  </Legend>}>
                  <Grid x1={556} y1={715} x2={556} y2={868} />
                  <Grid x1={710} y1={715} x2={710} y2={868} />
                  {[561.6, 575, 608, 712].map(x => <circle key={x} cx={x} cy="791" r="4.3" fill="#8fa5ec" />)}
                  <Axis x={556} y={876} textAnchor="middle">0.0bn</Axis>
                  <Axis x={710} y={876} textAnchor="middle">0.1bn</Axis>
                </Visual>

                <Visual x={816} y={643} w={242} h={249} head={62} pad={1} solid title={'Employee Residence, Company\nLocation and Employment Type'}
                  legend={<Legend>
                    <LegendName>Compa...</LegendName>
                    <LegendItem><Dot $c="#0ddbb8" />Argentina</LegendItem>
                    <LegendItem><Dot $c="#0a9be0" />Australia</LegendItem>
                    <ScrollArrow />
                  </Legend>}>
                  <line x1="936" y1="708" x2="936" y2="887" stroke="#666" strokeWidth="1" />
                  <line x1="821" y1="797" x2="1052" y2="797" stroke="#666" strokeWidth="1" />
                  <Axis x={830} y={719} $s={10.2} $c="#444" $b={500}>Freelance</Axis>
                  <Axis x={946} y={719} $s={10.2} $c="#444" $b={500}>Full-Time</Axis>
                  <Axis x={830} y={809} $s={10.2} $c="#444" $b={500}>Part-Time</Axis>
                </Visual>

                <Visual x={1077} y={643} w={289} h={250} head={40} pad={1} solid title={'Sum of Year by Experience Level and\nSalary_range'}>
                  {outer.map(([a, b, c]) => <path key={a} d={arcPath(1174, 785, 22, 56, a, b)} fill={c} stroke="#e4e2e2" strokeWidth=".8" />)}
                  {inner.map(([a, b, r, c]) => <path key={a} d={arcPath(1174, 785, 0, r, a, b)} fill={c} />)}
                  <g stroke="#f2f0f0" strokeWidth="1">
                    {[2, 118, 128, 160, 217, 262, 307, 330, 345].map(a => {
                      const t = ((a - 90) * Math.PI) / 180;
                      return <line key={a} x1="1174" y1="785" x2={1174 + 24 * Math.cos(t)} y2={785 + 24 * Math.sin(t)} />;
                    })}
                  </g>
                  {leaders.map(d => <path key={d} d={`M${d}`} fill="none" stroke="#8d8d8d" strokeWidth="1" />)}
                  {sunLabels.map(([x, y, t]) => <Axis key={x + '-' + y} x={x} y={y} $c="#6e6e6e">{t}</Axis>)}
                  <Axis x={1267} y={742} $s={12.5} $b={700} $c="#5a5a5a">Experience Le...</Axis>
                  {sunLegend.map(([t, y, c]) => (
                    <g key={t}><circle cx="1271.5" cy={y} r="4.5" fill={c} /><Axis x={1278} y={y} $s={12} $c="#6e6e6e">{t}</Axis></g>
                  ))}
                </Visual>
              </Report>
            </Canvas>
            <FilterPane>
              <DoubleChev />
              <svg width="20" height="20" viewBox="0 0 20 20" fill="none" style={{ marginTop: 24, marginLeft: 6, flex: 'none' }}><path d="M18 1L1 8l10 4 7 7z" stroke="#252423" strokeWidth="1.4" /></svg>
              <VertText $mt={11}>Filters</VertText>
            </FilterPane>
          </CanvasRow>
          <PageBar>
            <DeviceBtn $ml={15} $w={36} $pt={11} $active>
              <svg width="28" height="21" viewBox="0 0 28 21" fill="none" stroke="#605e5c" strokeWidth="1.5"><rect x=".8" y=".8" width="26.4" height="15" /><path d="M14 16v4M9 20.300h10" /></svg>
            </DeviceBtn>
            <DeviceBtn $ml={39} $w={18} $pt={7}>
              <svg width="18" height="30" viewBox="0 0 18 30" fill="none" stroke="#605e5c" strokeWidth="1.5"><rect x=".8" y=".8" width="16.4" height="28.4" rx="1.5" /><path d="M8 25h2" /></svg>
            </DeviceBtn>
            <PageArrow $ml={30} width="12" height="13" viewBox="0 0 12 13"><path d="M9 0v13L2 6.5z" fill="#c8c6c4" /></PageArrow>
            <PageArrow $ml={21} width="12" height="13" viewBox="0 0 12 13"><path d="M3 0v13l7-6.500z" fill="#c8c6c4" /></PageArrow>
            <PageTab>Page 1</PageTab>
            <PlusTab>
              <svg width="16" height="16" viewBox="0 0 16 16"><path d="M8 0v16M0 8h16" stroke="#fff" strokeWidth="3.5" /></svg>
            </PlusTab>
          </PageBar>
        </Middle>
        <VizPane>
          <DoubleChev />
          <VertText $mt={22}>Visualizations</VertText>
        </VizPane>
        <DataPane>
          <DataHead>Data<DataChevron as={DoubleChevSvg} /></DataHead>
          <DataSearch>
            <svg width="20" height="20" viewBox="0 0 20 20" fill="none"><circle cx="8" cy="8" r="6.5" stroke="#605e5c" strokeWidth="1.4" /><path d="M13 13l6 6" stroke="#605e5c" strokeWidth="1.4" /></svg>
            Search
          </DataSearch>
          <Tree>
            <TableRow>
              <svg width="16" height="10" viewBox="0 0 16 10" fill="none"><path d="M1 1l7 7 7-7" stroke="#484644" strokeWidth="1.1" /></svg>
              <svg width="18" height="18" viewBox="0 0 18 18" fill="none" stroke="#3b3a39" strokeWidth="1.3"><rect x="1" y="1" width="16" height="16" rx="2" /><path d="M1 6.300h16M1 11.700h16M6.300 1v16M11.700 1v16" /></svg>
              Job_Salaries_Cleaned_...
            </TableRow>
            {fields.map(([name, sum]) => (
              <FieldRow key={name}>
                <Check />
                <SigmaSlot>{sum ? <Sigma /> : null}</SigmaSlot>
                {name}
              </FieldRow>
            ))}
          </Tree>
          <Recorder>
            <svg width="30" height="16" viewBox="0 0 30 16" fill="none" style={{ flex: 'none' }}>
              <circle cx="9" cy="7" r="4.5" stroke="#ddd" strokeWidth="1.3" /><path d="M2 14c3 0 4-2 5-4M4 7c4-5 8-5 10-4" stroke="#ddd" strokeWidth="1.1" />
              <rect x="18" y="6" width="3" height="2.5" fill="#fff" /><rect x="22.5" y="6" width="3" height="2.5" fill="#fff" /><rect x="27" y="6" width="3" height="2.5" fill="#fff" />
            </svg>
            <svg width="30" height="24" viewBox="0 0 30 24" style={{ marginTop: 11, flex: 'none' }}>
              <path d="M0 4h8l2-4h10l2 4h8v20H0z" fill="#fff" /><circle cx="15" cy="13" r="5.5" fill="none" stroke="#1a1a1a" strokeWidth="1.6" /><circle cx="25.5" cy="7" r="1" fill="#1a1a1a" />
            </svg>
            <svg width="30" height="20" viewBox="0 0 30 20" style={{ marginTop: 17, flex: 'none' }}><rect width="22" height="19" fill="#fff" /><path d="M22 8l8-7v17l-8-7z" fill="#fff" /></svg>
            <svg width="30" height="24" viewBox="0 0 30 24" style={{ marginTop: 17, flex: 'none' }}><path d="M0 0h27v1.5H1.5V22H0z" fill="#fff" /><rect x="4" y="4" width="26" height="20" fill="#fff" /></svg>
            <svg width="30" height="30" viewBox="0 0 24 24" style={{ marginTop: 12, flex: 'none' }}><path fill="#fff" fillRule="evenodd" d="M10 1h4l.6 3 2 .9 2.6-1.700 2.8 2.8-1.700 2.6.9 2 3 .6v4l-3 .6-.9 2 1.700 2.6-2.8 2.8-2.6-1.700-2 .9-.6 3h-4l-.6-3-2-.9-2.6 1.700-2.8-2.8 1.700-2.6-.9-2-3-.6v-4l3-.6.9-2-1.700-2.6 2.8-2.8 2.6 1.700 2-.9zM12 8a4 4 0 1 0 0 8 4 4 0 0 0 0-8z" transform="translate(-.5 -.5) scale(1.04)" /></svg>
          </Recorder>
        </DataPane>
      </Main>

      <Status>
        <StatusPageText>Page 1 of 1</StatusPageText>
        <ZoomBar>
          <ZoomSign $w={10} $s={20}>-</ZoomSign>
          <ZoomTrack><ZoomThumb /><ZoomTick /></ZoomTrack>
          <ZoomSign $w={28} $s={22}>+</ZoomSign>
          <ZoomPct>60%</ZoomPct>
          <FitIcon width="25" height="20" viewBox="0 0 25 20" fill="none"><rect x=".7" y=".7" width="23.6" height="18.6" stroke="#605e5c" strokeWidth="1.2" /><path d="M4 8V4h4M17 4h4v4" stroke="#605e5c" strokeWidth="1.2" /></FitIcon>
        </ZoomBar>
      </Status>
    </Page>
  );
}
